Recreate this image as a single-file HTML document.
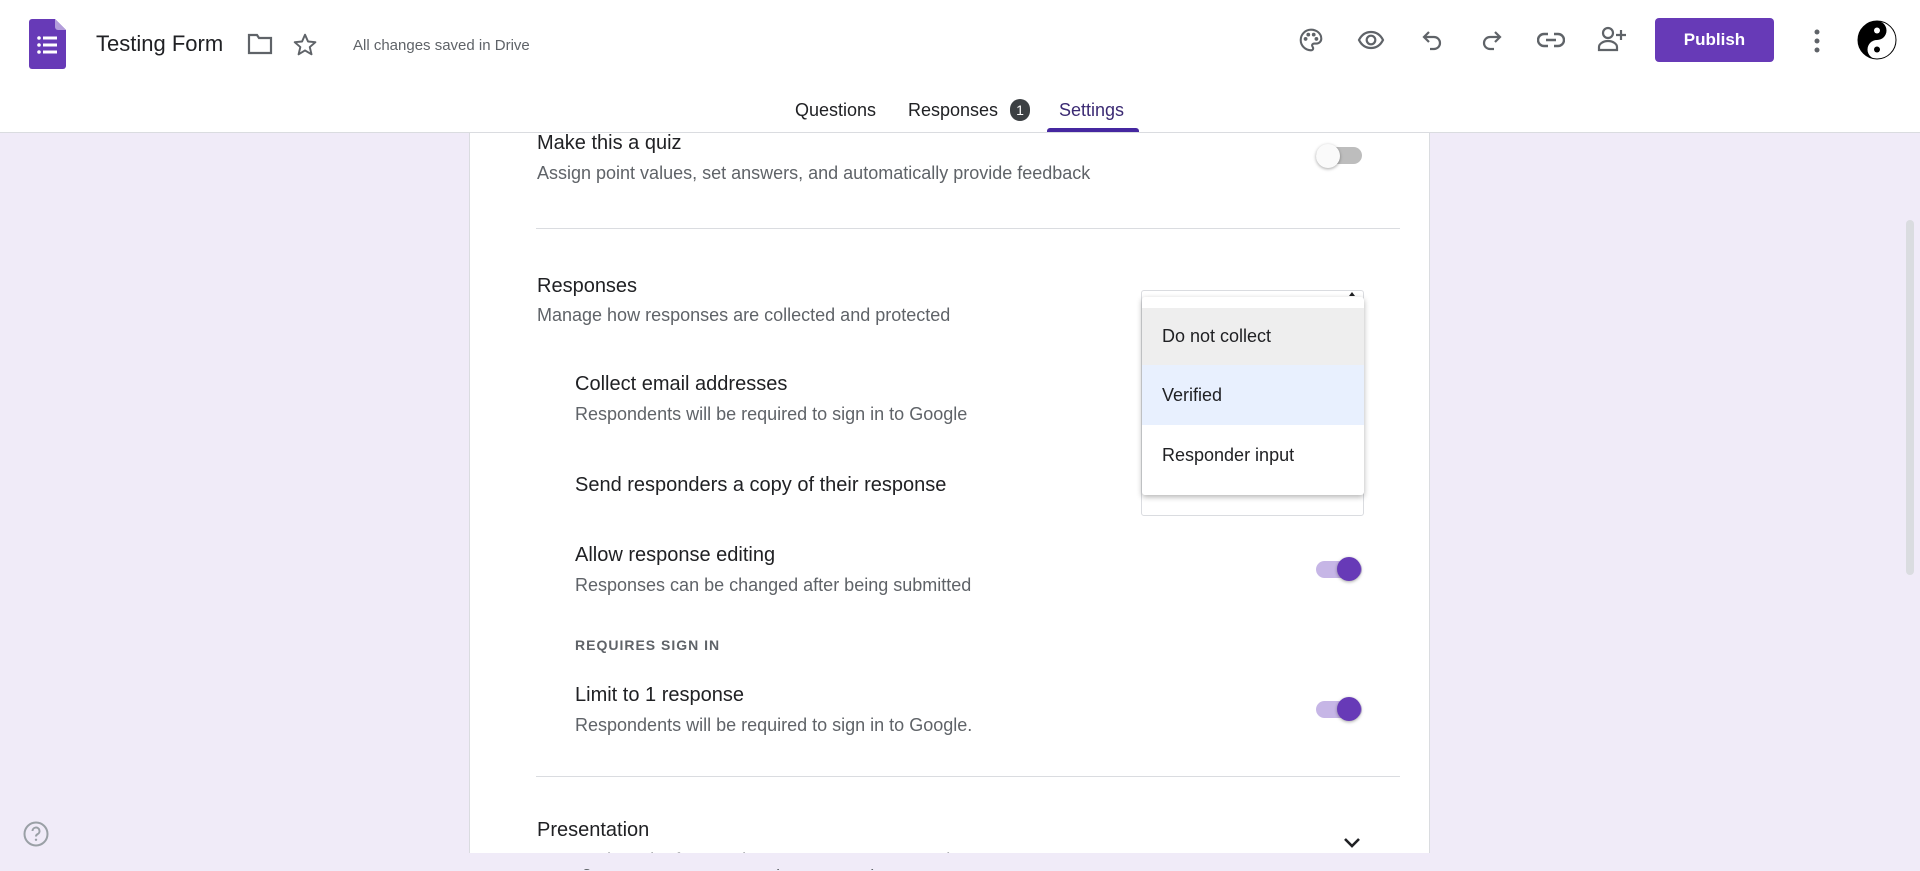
<!DOCTYPE html>
<html><head><meta charset="utf-8"><style>
*{box-sizing:border-box;margin:0;padding:0}
body{width:1920px;height:869px;overflow:hidden;background:#f0ebf8;font-family:"Liberation Sans",Arial,sans-serif;position:relative;color:#202124}
.a{position:absolute;white-space:nowrap}
.hdr{position:absolute;left:0;top:0;width:1920px;height:133px;background:#fff;border-bottom:1px solid #dadce0}
.card{position:absolute;left:469px;top:133px;width:961px;height:720px;background:#fff;border-left:1px solid #dadce0;border-right:1px solid #dadce0}
.t{font-size:20px;color:#202124}
.s{font-size:18px;color:#5f6368}
.div{position:absolute;height:1px;background:#dadce0;left:536px;width:864px}
.tr{position:absolute;width:46px;height:17px;border-radius:9px}
.th{position:absolute;width:24px;height:24px;border-radius:50%;box-shadow:0 1px 3px rgba(0,0,0,.35)}
.ic{position:absolute}
</style></head><body>
<div class="hdr"></div>
<svg class="ic" style="left:29px;top:19px" width="37" height="50" viewBox="0 0 37 50"><path d="M3 0H26L37 11V47a3 3 0 0 1-3 3H3a3 3 0 0 1-3-3V3a3 3 0 0 1 3-3z" fill="#673ab7"/><path d="M26 0L37 11H29a3 3 0 0 1-3-3z" fill="#b39ddb"/><g fill="#fff"><circle cx="10" cy="19" r="1.8"/><circle cx="10" cy="26" r="1.8"/><circle cx="10" cy="33" r="1.8"/><rect x="14" y="17.5" width="14" height="3"/><rect x="14" y="24.5" width="14" height="3"/><rect x="14" y="31.5" width="14" height="3"/></g></svg>
<div class="a" style="left:96px;top:31px;font-size:22px;color:#202124">Testing Form</div>
<svg class="ic" style="left:247px;top:33px" width="26" height="22" viewBox="0 0 26 22"><path d="M2 2h8l2 3h12v15H2z" fill="none" stroke="#5f6368" stroke-width="2.2"/></svg>
<svg class="ic" style="left:292px;top:32px" width="26" height="26" viewBox="0 0 24 24"><path d="M12 2.5l2.8 6.3 6.8.6-5.2 4.5 1.6 6.7L12 17l-5.9 3.6 1.6-6.7-5.2-4.5 6.8-.6z" fill="none" stroke="#5f6368" stroke-width="1.8" stroke-linejoin="round"/></svg>
<div class="a" style="left:353px;top:37px;font-size:15px;color:#5f6368">All changes saved in Drive</div>
<svg class="ic" style="left:1298px;top:27px" width="26" height="26" viewBox="0 0 24 24" fill="none" stroke="#5f6368" stroke-width="1.9"><path d="M12 2.5a9.5 9.5 0 0 0 0 19c1.3 0 2-.8 2-1.8 0-1.2-1-1.6-1-2.7 0-1 .8-1.7 1.8-1.7H17a4.5 4.5 0 0 0 4.5-4.5C21.5 6 17.2 2.5 12 2.5z"/><circle cx="7" cy="11" r=".8" fill="#5f6368"/><circle cx="9.5" cy="7" r=".8" fill="#5f6368"/><circle cx="14.5" cy="7" r=".8" fill="#5f6368"/><circle cx="17" cy="11" r=".8" fill="#5f6368"/></svg>
<svg class="ic" style="left:1357px;top:28px" width="28" height="24" viewBox="0 0 28 24" fill="none" stroke="#5f6368" stroke-width="2.2"><path d="M2 12C5 6 9 4 14 4s9 2 12 8c-3 6-7 8-12 8S5 18 2 12z"/><circle cx="14" cy="12" r="4.3"/></svg>
<svg class="ic" style="left:1420px;top:28px" width="24" height="24" viewBox="0 0 24 24" fill="none" stroke="#5f6368" stroke-width="2.2"><path d="M9 4L4 9l5 5"/><path d="M4 9h10a6 6 0 0 1 0 12h-4"/></svg>
<svg class="ic" style="left:1480px;top:28px" width="24" height="24" viewBox="0 0 24 24" fill="none" stroke="#5f6368" stroke-width="2.2"><path d="M15 4l5 5-5 5"/><path d="M20 9H10a6 6 0 0 0 0 12h4"/></svg>
<svg class="ic" style="left:1537px;top:30px" width="28" height="20" viewBox="0 0 28 20" fill="none" stroke="#5f6368" stroke-width="2.4"><path d="M11 4H7a6 6 0 0 0 0 12h4M17 4h4a6 6 0 0 1 0 12h-4M9 10h10"/></svg>
<svg class="ic" style="left:1597px;top:25px" width="30" height="28" viewBox="0 0 30 28" fill="none" stroke="#5f6368" stroke-width="2.2"><circle cx="11" cy="8" r="5"/><path d="M2 25v-3c0-3 4-6 9-6s9 3 9 6v3z"/><path d="M24 5v10M19 10h10"/></svg>
<div class="a" style="left:1655px;top:18px;width:119px;height:44px;background:#673ab7;border-radius:4px;color:#fff;font-size:17px;font-weight:bold;text-align:center;line-height:44px">Publish</div>
<svg class="ic" style="left:1811px;top:28px" width="12" height="26" viewBox="0 0 12 26" fill="#5f6368"><circle cx="6" cy="4" r="2.5"/><circle cx="6" cy="13" r="2.5"/><circle cx="6" cy="22" r="2.5"/></svg>
<svg class="ic" style="left:1857px;top:20px" width="40" height="40" viewBox="-20 -20 40 40"><circle r="19" fill="#fff"/><path d="M0-19A19 19 0 0 0 0 19z" fill="#000"/><circle cy="-9.5" r="9.5" fill="#000"/><circle cy="9.5" r="9.5" fill="#fff"/><circle cy="-9.5" r="3" fill="#fff"/><circle cy="9.5" r="3" fill="#000"/><circle r="19" fill="none" stroke="#000" stroke-width="1"/></svg>
<div class="a" style="left:795px;top:100px;font-size:18px;color:#202124">Questions</div>
<div class="a" style="left:908px;top:100px;font-size:18px;color:#202124">Responses</div>
<div class="a" style="left:1010px;top:99px;width:20px;height:22px;border-radius:10px;background:#3c4043;color:#fff;font-size:14px;text-align:center;line-height:22px">1</div>
<div class="a" style="left:1059px;top:100px;font-size:18px;color:#3b2a73">Settings</div>
<div class="a" style="left:1047px;top:128px;width:92px;height:4px;background:#4527a0;border-radius:3px 3px 0 0"></div>
<div class="card"></div>
<div class="a t" style="left:537px;top:132px">Make this a quiz</div>
<div class="a s" style="left:537px;top:163px">Assign point values, set answers, and automatically provide feedback</div>
<div class="tr" style="left:1316px;top:147px;background:#bdbdbd"></div>
<div class="th" style="left:1316px;top:144px;background:#fafafa"></div>
<div class="div" style="top:228px"></div>
<div class="a t" style="left:537px;top:275px">Responses</div>
<div class="a s" style="left:537px;top:305px">Manage how responses are collected and protected</div>
<div class="a t" style="left:575px;top:373px">Collect email addresses</div>
<div class="a s" style="left:575px;top:404px">Respondents will be required to sign in to Google</div>
<div class="a t" style="left:575px;top:474px">Send responders a copy of their response</div>
<div class="a t" style="left:575px;top:544px">Allow response editing</div>
<div class="a s" style="left:575px;top:575px">Responses can be changed after being submitted</div>
<div class="tr" style="left:1316px;top:561px;background:#c6b6e6"></div>
<div class="th" style="left:1337px;top:557px;background:#673ab7"></div>
<div class="a" style="left:575px;top:637px;font-size:14px;color:#5f6368;letter-spacing:1px;font-weight:bold">REQUIRES SIGN IN</div>
<div class="a t" style="left:575px;top:684px">Limit to 1 response</div>
<div class="a s" style="left:575px;top:715px">Respondents will be required to sign in to Google.</div>
<div class="tr" style="left:1316px;top:701px;background:#c6b6e6"></div>
<div class="th" style="left:1337px;top:697px;background:#673ab7"></div>
<div class="div" style="top:776px"></div>
<div class="a t" style="left:537px;top:819px">Presentation</div>
<div class="a s" style="left:537px;top:850px;color:#5f6368">Manage how the form and responses are presented</div>
<svg class="ic" style="left:1342px;top:836px" width="20" height="14" viewBox="0 0 20 14"><path d="M3 3l7 7 7-7" fill="none" stroke="#202124" stroke-width="2.6"/></svg>
<div class="a" style="left:0;top:853px;width:1920px;height:16px;background:#f0ebf8"></div>
<div class="a" style="left:1141px;top:290px;width:223px;height:226px;border:1px solid #dadce0;border-radius:3px;background:#fff"></div>
<div class="a" style="left:1349px;top:292px;width:0;height:0;border-left:3px solid transparent;border-right:3px solid transparent;border-bottom:4px solid #202124"></div>
<div class="a" style="left:1142px;top:297px;width:222px;height:198px;background:#fff;border-radius:3px;box-shadow:0 2px 6px rgba(0,0,0,.3)">
<div style="margin-top:11px;height:57px;background:#eeeeee;font-size:18px;line-height:57px;padding-left:20px">Do not collect</div>
<div style="height:60px;background:#e8f0fe;font-size:18px;line-height:60px;padding-left:20px">Verified</div>
<div style="height:60px;font-size:18px;line-height:60px;padding-left:20px">Responder input</div>
</div>
<div class="a" style="left:1906px;top:220px;width:8px;height:355px;background:#dadce0;border-radius:4px"></div>
<svg class="ic" style="left:22px;top:820px" width="28" height="28" viewBox="0 0 28 28"><circle cx="14" cy="14" r="11.5" fill="none" stroke="#9aa0a6" stroke-width="2"/><path d="M10.5 11a3.5 3.5 0 1 1 5 3.2c-1 .5-1.5 1.2-1.5 2.3" fill="none" stroke="#9aa0a6" stroke-width="2"/><circle cx="14" cy="19.8" r="1.2" fill="#9aa0a6"/></svg>
</body></html>
